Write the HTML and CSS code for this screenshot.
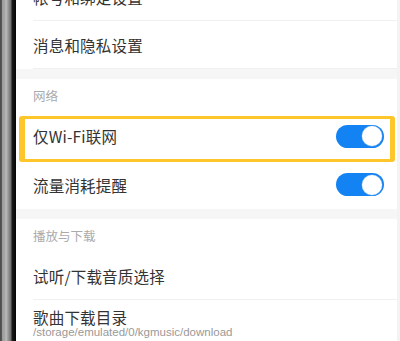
FILE: index.html
```html
<!DOCTYPE html>
<html lang="zh">
<head>
<meta charset="utf-8">
<link rel="stylesheet" href="styles.css">
</head>
<body>
<div class="device">
  <div class="bezel"></div>
  <div class="screen">
    <div class="list">
      <div class="row"><span class="label">帐号和绑定设置</span></div>
      <div class="row"><span class="label">消息和隐私设置</span></div>
      <div class="band"></div>
      <div class="header">网络</div>
      <div class="row highlight-row">
        <span class="label">仅Wi-Fi联网</span>
        <span class="toggle"><span class="knob"></span></span>
        <div class="highlight"></div>
      </div>
      <div class="row no-line">
        <span class="label">流量消耗提醒</span>
        <span class="toggle"><span class="knob"></span></span>
      </div>
      <div class="band"></div>
      <div class="header">播放与下载</div>
      <div class="row"><span class="label">试听/下载音质选择</span></div>
      <div class="row two-line no-line">
        <span class="label">歌曲下载目录</span>
        <span class="sub">/storage/emulated/0/kgmusic/download</span>
      </div>
    </div>
  </div>
  <div class="edge"></div>
</div>
</body>
</html>
```

FILE: styles.css
```css
html, body {
  margin: 0;
  padding: 0;
  background: #fff;
}
body {
  width: 400px;
  height: 341px;
  overflow: hidden;
  font-family: "Noto Sans CJK SC", "Liberation Sans", sans-serif;
}
.device {
  display: flex;
  height: 341px;
}
.bezel {
  width: 16px;
  flex: none;
  background: linear-gradient(to right, #4a4a4a 0, #5a5a5a 2px, #9a9a9a 2px, #a8a8a8 5px, #bdbdbd 6px, #8a8a8a 9px, #6e6e6e 11px, #1a1a1a 12px, #050505 16px);
}
.edge {
  width: 3px;
  flex: none;
  background: #f3f3f3;
}
.screen {
  flex: 1;
  background: #fff;
  overflow: hidden;
}
.list {
  display: flex;
  flex-direction: column;
  margin-top: -27px;
}
.row {
  position: relative;
  height: 48px;
  display: flex;
  align-items: center;
  justify-content: space-between;
  padding: 0 13px 0 17px;
}
.row::after {
  content: "";
  position: absolute;
  left: 17px;
  right: 0;
  bottom: 0;
  height: 1px;
  background: #f0f0f0;
}
.row.no-line::after {
  display: none;
}
.label {
  font-size: 15.5px;
  color: #333;
  letter-spacing: 0.2px;
}
.band {
  height: 10px;
  background: #f6f6f6;
}
.header {
  height: 33px;
  display: flex;
  align-items: center;
  padding-left: 17px;
  font-size: 12.5px;
  color: #aaa;
}
.highlight-row::after {
  display: none;
}
.row.no-line {
  height: 49px;
}
.toggle {
  width: 48px;
  height: 23px;
  border-radius: 12px;
  background: #1383f3;
  display: flex;
  align-items: center;
  justify-content: flex-end;
  padding-right: 2px;
  box-sizing: border-box;
}
.knob {
  width: 20px;
  height: 20px;
  border-radius: 50%;
  background: #fff;
  box-shadow: 0 0 0 0.5px #6aa9f0;
}
.highlight {
  position: absolute;
  left: 3px;
  right: 2px;
  top: 4px;
  bottom: -2px;
  border-style: solid;
  border-color: #fdc62a;
  border-width: 3px 5px 3px 6px;
  border-radius: 3px;
  pointer-events: none;
}
.two-line {
  flex-direction: column;
  align-items: flex-start;
  justify-content: flex-start;
  padding-top: 8px;
  box-sizing: border-box;
}
.two-line .label {
  line-height: 18px;
}
.sub {
  font-family: "Liberation Sans", "Noto Sans CJK SC", sans-serif;
  font-size: 11.5px;
  line-height: 12px;
  color: #999;
  margin-top: 0;
}
```
